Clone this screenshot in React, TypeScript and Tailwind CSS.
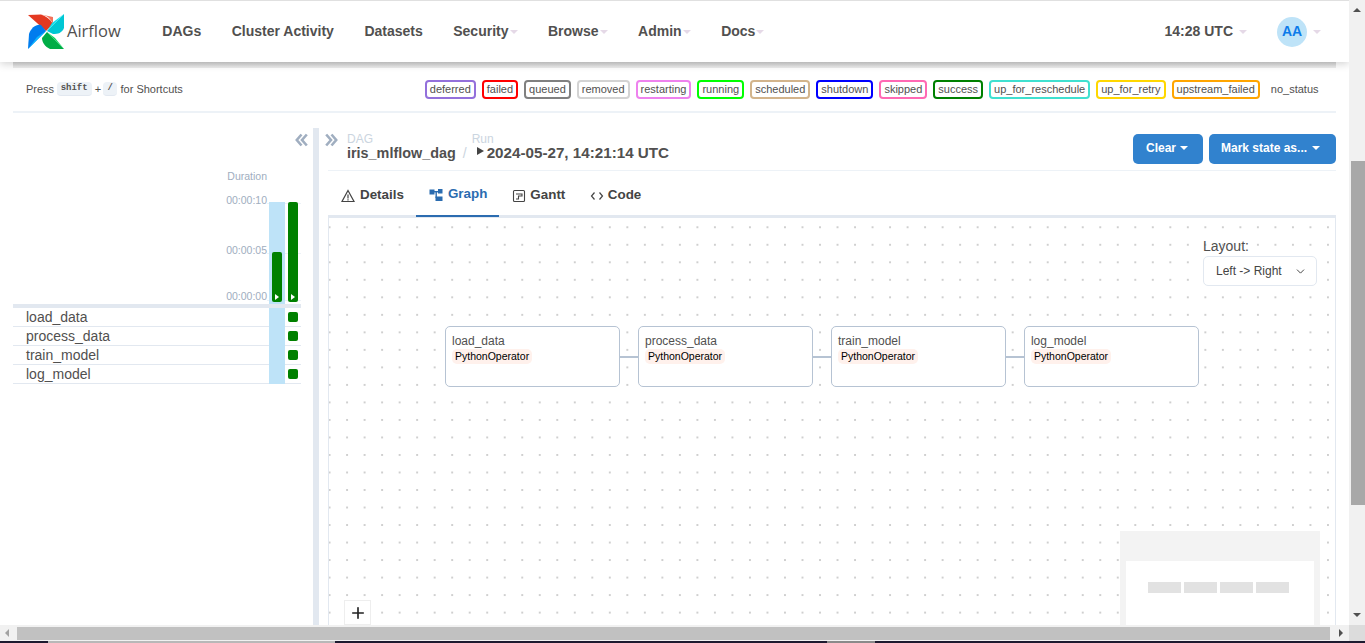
import { ChevronDown, Plus } from "lucide-react";

const legend: [string, string][] = [
  ["deferred", "border-[#9370db]"],
  ["failed", "border-[#ff0000]"],
  ["queued", "border-[#808080]"],
  ["removed", "border-[#d3d3d3]"],
  ["restarting", "border-[#ee82ee]"],
  ["running", "border-[#00ff00]"],
  ["scheduled", "border-[#d2b48c]"],
  ["shutdown", "border-[#0000ff]"],
  ["skipped", "border-[#ff69b4]"],
  ["success", "border-[#008000]"],
  ["up_for_reschedule", "border-[#40e0d0]"],
  ["up_for_retry", "border-[#ffd700]"],
  ["upstream_failed", "border-[#ffa500]"],
  ["no_status", "border-transparent"],
];

const nav: [string, boolean][] = [
  ["DAGs", false],
  ["Cluster Activity", false],
  ["Datasets", false],
  ["Security", true],
  ["Browse", true],
  ["Admin", true],
  ["Docs", true],
];

const tasks = ["load_data", "process_data", "train_model", "log_model"];

function Caret({ className }: { className: string }) {
  return <span className={`inline-block w-0 h-0 border-x-[4px] border-x-transparent border-t-[4px] ${className}`} />;
}

function Logo() {
  return (
    <svg width="37" height="36" viewBox="0 0 37 36" className="shrink-0">
      <path d="M0 1 L13 0.5 C18 2 22 5 25 10 L18 17 Z" fill="#e43921" />
      <path d="M25 10 C23 6 21 3.5 18 2 L13 0.5 L25 3 Z" fill="#f4725b" />
      <path d="M36 0 L36 14 C34 19 30 20 25 20 L19 17 Z" fill="#00c7d4" />
      <path d="M36 0 L19 17 L24 9 Z" fill="#11e1ee" />
      <path d="M36 35 L22 35 C17 33 14 28 14 24 L19 18 Z" fill="#00ad46" />
      <path d="M36 35 L19 18 L27 24 Z" fill="#04d659" />
      <path d="M0 35 L1 20 C3 14 8 10 13 11 L18 17 Z" fill="#017cee" />
      <path d="M0 35 L18 17 L9 23 Z" fill="#0cb6ff" />
    </svg>
  );
}

function Play({ className }: { className: string }) {
  return <span className={`inline-block w-0 h-0 border-y-[3px] border-y-transparent border-l-[4px] ${className}`} />;
}

function DetailsIcon() {
  return (
    <svg width="14" height="14" viewBox="0 0 14 14" fill="none" stroke="#444" strokeWidth="1.2">
      <path d="M7 1.5 L13 12.5 H1 Z" />
      <path d="M7 5.5 V9.5 M7 10.3 V11.5" />
    </svg>
  );
}

function GraphIcon() {
  return (
    <svg width="14" height="14" viewBox="0 0 14 14" fill="#2b6cb0">
      <rect x="0.5" y="1.5" width="5" height="5" />
      <rect x="9" y="1" width="4.5" height="4.5" />
      <rect x="6.5" y="8.5" width="7" height="4.5" />
      <rect x="5" y="3" width="4.5" height="1.4" />
      <rect x="6.5" y="3" width="1.4" height="7" />
    </svg>
  );
}

function GanttIcon() {
  return (
    <svg width="14" height="14" viewBox="0 0 14 14" fill="none" stroke="#444" strokeWidth="1.1">
      <rect x="1.5" y="1.5" width="11" height="11" rx="1" />
      <path d="M4 5 H10 V7 H6.5 V10 H4" />
    </svg>
  );
}

function CodeIcon() {
  return (
    <svg width="14" height="14" viewBox="0 0 14 14" fill="none" stroke="#444" strokeWidth="1.2">
      <path d="M4.5 3.5 L1.5 7 L4.5 10.5 M9.5 3.5 L12.5 7 L9.5 10.5" />
    </svg>
  );
}

function DoubleChevron({ left }: { left?: boolean }) {
  return (
    <svg width="13" height="14" viewBox="0 0 13 14" fill="none" stroke="#a0aec0" strokeWidth="2.6">
      {left ? <path d="M6.5 1.5 L1.8 7 L6.5 12.5 M11.8 1.5 L7 7 L11.8 12.5" /> : <path d="M1.2 1.5 L6 7 L1.2 12.5 M6.5 1.5 L11.2 7 L6.5 12.5" />}
    </svg>
  );
}

function Node({ name }: { name: string }) {
  return (
    <div className="w-[175.4px] h-[61px] shrink-0 bg-white border border-[#b6c3d3] rounded-[5px] pl-[6px] pt-[6px]">
      <div className="text-[12px] leading-[16px] text-[#51504f]">{name}</div>
      <div className="w-fit bg-[#fff1ec] rounded-[5px] px-[3px] text-[10.5px] leading-[15px] text-black">PythonOperator</div>
    </div>
  );
}

function Tab({ icon, label, active, tight }: { icon: React.ReactNode; label: string; active?: boolean; tight?: boolean }) {
  return (
    <div className={`flex items-center pl-[13px] pt-[5px] text-[13.4px] font-bold ${tight ? "gap-[4px] pr-[11.5px]" : "gap-[5px] pr-[12px]"} ${active ? "text-[#2b6cb0] border-b-2 border-[#2b6cb0] h-[46px] pb-[2px]" : "text-[#444] h-[44px]"}`}>
      {icon}
      {label}
    </div>
  );
}

export default function App() {
  return (
    <div className="h-[643px] w-[1365px] overflow-hidden flex flex-col bg-white text-[#51504f] font-['Liberation_Sans',Arial,sans-serif]">
      <div className="flex h-[625px] shrink-0">
        <div className="w-[1349px] h-[625px] shrink-0 overflow-hidden flex flex-col border-t border-[#e0e0e0]">
          {/* top navigation */}
          <header className="relative z-10 h-[61px] shrink-0 bg-white shadow-[0_2px_8px_rgba(0,0,0,0.18)] flex items-center pl-[28px] pr-[28px]">
            <Logo />
            <span className="ml-[2px] text-[16.5px] text-[#51504f] font-['Open_Sans',sans-serif]">Airflow</span>
            <nav className="ml-[41.5px] flex items-center text-[14px] font-bold gap-[30.5px]">
              {nav.map(([n, c]) => (
                <span key={n} className="flex items-center gap-[1px]">
                  {n}
                  {c && <Caret className="border-t-[#e5d9e7]" />}
                </span>
              ))}
            </nav>
            <div className="ml-auto flex items-center">
              <span className="text-[14px] font-bold">14:28 UTC</span>
              <Caret className="ml-[6px] border-t-[#e5d9e7]" />
              <span className="ml-[30px] w-[30px] h-[30px] rounded-full bg-[#bee3f8] text-[#0d7bea] text-[14px] font-bold flex items-center justify-center">AA</span>
              <Caret className="ml-[6px] border-t-[#e5d9e7]" />
            </div>
          </header>

          <main className="flex-1 min-h-0 mx-[13px] flex flex-col">
            <div className="h-[6px] shrink-0 bg-gradient-to-b from-[#d4d4d4] to-[#eeeeee]" />
            {/* shortcuts and legend */}
            <div className="h-[45px] shrink-0 border-b-2 border-[#edf2f7] flex items-center pl-[13px] pr-[12.5px] pb-[1px] text-[11px]">
              <span>Press</span>
              <kbd className="ml-[2.5px] px-[4px] h-[14px] flex items-center rounded-[4px] bg-[#edf2f7] border-b border-[#e2e8f0] font-['Liberation_Mono',monospace] text-[9px] font-bold">shift</kbd>
              <span className="ml-[3px] mr-[2px]">+</span>
              <kbd className="px-[4.5px] h-[14px] flex items-center rounded-[4px] bg-[#edf2f7] border-b border-[#e2e8f0] font-['Liberation_Mono',monospace] text-[9px] font-bold">/</kbd>
              <span className="ml-[3px]">for Shortcuts</span>
              <div className="ml-auto flex items-center gap-[6px]">
                {legend.map(([t, c]) => (
                  <span key={t} className={`h-[19px] px-[3px] border-2 rounded-[4px] leading-[15px] ${c}`}>{t}</span>
                ))}
              </div>
            </div>

            <div className="flex-1 min-h-0 flex pt-[15px]">
              {/* grid */}
              <section className="w-[300px] shrink-0 relative">
                <div className="flex justify-end h-[14px] mt-[5px] pr-[5px]"><DoubleChevron left /></div>
                <div className="absolute right-[46px] top-[41px] text-[10.5px] text-[#a0aec0]">Duration</div>
                <div className="absolute left-0 w-[288px] top-[74px]">
                  <div className="relative h-[102px]">
                    <div className="absolute right-[34px] top-[-8px] text-[10.5px] leading-[12px] text-[#a0aec0]">00:00:10</div>
                    <div className="absolute right-[34px] top-[42px] text-[10.5px] leading-[12px] text-[#a0aec0]">00:00:05</div>
                    <div className="absolute right-[34px] top-[88px] text-[10.5px] leading-[12px] text-[#a0aec0]">00:00:00</div>
                    <div className="absolute left-[254px] right-0 top-[1px] h-px bg-[#edf2f7]" />
                    <div className="absolute left-[254px] right-0 top-[51px] h-px bg-[#edf2f7]" />
                    <div className="absolute left-[254px] right-0 top-[98px] h-px bg-[#edf2f7]" />
                    <div className="absolute left-[256px] w-[16px] top-0 bottom-0 bg-[#bee3f8]" />
                    <div className="absolute left-[259px] w-[10px] top-[50px] h-[50px] bg-[#008000] rounded-[2px] flex items-end justify-center pb-[2px]"><Play className="border-l-white" /></div>
                    <div className="absolute left-[275px] w-[10px] top-0 h-[100px] bg-[#008000] rounded-[2px] flex items-end justify-center pb-[2px]"><Play className="border-l-white" /></div>
                  </div>
                  <div className="h-[4px] bg-[#e2e8f0]" />
                  {tasks.map((t) => (
                    <div key={t} className="relative h-[19px] border-b border-[#e2e8f0] pl-[13px] text-[14px] leading-[18px]">
                      {t}
                      <div className="absolute left-[256px] w-[16px] top-0 h-[19px] bg-[#bee3f8]" />
                      <div className="absolute left-[275px] top-[4px] w-[10px] h-[10px] bg-[#008000] rounded-[2px]" />
                    </div>
                  ))}
                </div>
              </section>

              <div className="w-[6px] shrink-0 bg-[#e2e8f0]" />

              {/* details */}
              <section className="flex-1 min-w-0 pl-[9px] flex flex-col">
                <div className="h-[43px] shrink-0 border-b border-[#edf2f7] flex">
                  <div className="w-[13px] mt-[5px] shrink-0 -ml-[3px]"><DoubleChevron /></div>
                  <div className="ml-[9px] mt-[5px]">
                    <div className="text-[12px] leading-[12px] text-[#cbd5e0]">DAG</div>
                    <div className="text-[14.4px] font-bold leading-[18px] -mt-px">iris_mlflow_dag</div>
                  </div>
                  <div className="ml-[7px] mt-[16px] text-[14px] leading-[18px] text-[#cbd5e0]">/</div>
                  <div className="ml-[5px] mt-[5px]">
                    <div className="text-[12px] leading-[12px] text-[#cbd5e0]">Run</div>
                    <div className="flex items-start text-[15.2px] font-bold leading-[18px] -mt-px">
                      <span className="mt-[3px] mr-[3px] ml-[5px] w-0 h-0 border-y-[4px] border-y-transparent border-l-[7px] border-l-[#444]" />
                      2024-05-27, 14:21:14 UTC
                    </div>
                  </div>
                  <div className="ml-auto flex gap-[6px] mt-[6px] h-[30px]">
                    <div className="w-[70px] rounded-[5px] bg-[#3182ce] text-white text-[12px] font-bold flex items-center pl-[13px] pb-[2px] gap-[4px]">Clear<Caret className="border-t-white" /></div>
                    <div className="w-[127px] rounded-[5px] bg-[#3182ce] text-white text-[12px] font-bold flex items-center pl-[12px] pb-[2px] gap-[5px]">Mark state as...<Caret className="border-t-white" /></div>
                  </div>
                </div>

                <div className="h-[47px] shrink-0 flex items-start border-b-[3px] border-[#e2e8f0]">
                  <Tab icon={<DetailsIcon />} label="Details" />
                  <Tab icon={<GraphIcon />} label="Graph" active />
                  <Tab icon={<GanttIcon />} label="Gantt" tight />
                  <Tab icon={<CodeIcon />} label="Code" tight />
                </div>

                <div className="relative flex-1 min-h-0 border-x border-[#e2e8f0] overflow-hidden bg-[radial-gradient(circle,#aaaaaa_0.6px,transparent_0.8px)] bg-[size:17.53px_17.53px] bg-[position:-8.2px_0.5px]">
                  <div className="flex items-center pl-[116px] pt-[108px]">
                    {tasks.map((t, i) => (
                      <div key={t} className="flex items-center">
                        {i > 0 && <div className="w-[17.6px] h-[2px] bg-[#b6c3d3]" />}
                        <Node name={t} />
                      </div>
                    ))}
                  </div>
                  <div className="absolute left-[874px] top-[20px] w-[114px]">
                    <div className="text-[14px] leading-[16px] text-[#51504f]">Layout:</div>
                    <div className="h-[30px] mt-[2px] bg-white border border-[#e2e8f0] rounded-[5px] flex items-center pl-[12px] pr-[9px] text-[12px] text-[#444]">
                      Left -&gt; Right
                      <ChevronDown className="ml-auto" size={13} strokeWidth={1.8} />
                    </div>
                  </div>
                  <div className="absolute left-[15px] bottom-0 w-[27px] h-[25px] bg-white border border-[#eeeeee] flex items-center justify-center text-[#222]">
                    <Plus size={18} strokeWidth={2.2} />
                  </div>
                  <div className="absolute left-[791px] bottom-0 w-[200px] h-[94px] bg-[#f3f3f3] px-[6px] pt-[30px]">
                    <div className="h-[64px] bg-white flex justify-start gap-[3px] pl-[22px] pt-[21px]">
                      <div className="w-[33px] h-[11px] bg-[#e2e2e2]" />
                      <div className="w-[33px] h-[11px] bg-[#e2e2e2]" />
                      <div className="w-[33px] h-[11px] bg-[#e2e2e2]" />
                      <div className="w-[33px] h-[11px] bg-[#e2e2e2]" />
                    </div>
                  </div>
                </div>
              </section>
            </div>
          </main>
        </div>

        {/* vertical scrollbar */}
        <div className="w-[16px] shrink-0 bg-[#f1f1f1] flex flex-col items-center relative">
          <span className="mt-[8px] w-0 h-0 border-x-[4px] border-x-transparent border-b-[4px] border-b-[#505050]" />
          <div className="absolute right-0 top-[161px] w-[14px] h-[344px] bg-[#a8a8a8]" />
          <span className="absolute bottom-[8px] w-0 h-0 border-x-[4px] border-x-transparent border-t-[4px] border-t-[#505050]" />
        </div>
      </div>

      {/* horizontal scrollbar */}
      <div className="h-[16px] shrink-0 flex bg-[#f1f1f1]">
        <div className="w-[1349px] flex items-center relative">
          <span className="absolute left-[5px] w-0 h-0 border-y-[4px] border-y-transparent border-r-[4px] border-r-[#a3a3a3]" />
          <div className="absolute left-[17px] right-[19px] top-[2px] bottom-[1px] bg-[#c1c1c1]" />
          <span className="absolute right-[6px] w-0 h-0 border-y-[4px] border-y-transparent border-l-[4px] border-l-[#505050]" />
        </div>
        <div className="flex-1 bg-[#dcdcdc]" />
      </div>
      <div className="h-[2px] shrink-0 flex">
        <div className="w-[48px] bg-[#1d1a2f]" />
        <div className="w-[287px] bg-[#b8b8b8]" />
        <div className="w-[492px] bg-[#1d1a2f]" />
        <div className="w-[48px] bg-[#8a8a8a]" />
        <div className="flex-1 bg-[#1d1a2f]" />
      </div>
    </div>
  );
}
